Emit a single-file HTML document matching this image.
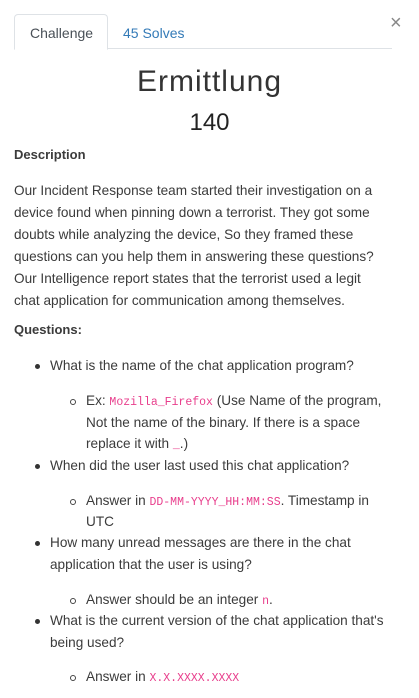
<!DOCTYPE html>
<html><head><meta charset="utf-8"><style>
body{margin:0;width:419px;height:698px;background:#fff;font-family:"Liberation Sans",sans-serif;color:#3b3b3b;position:relative;overflow:hidden}
.l{position:absolute;white-space:nowrap;font-size:13.6px;line-height:22px;height:22px}
code{font-family:"Liberation Mono",monospace;color:#e83e8c;font-size:11.5px}
.dot{position:absolute;width:5px;height:5px;border-radius:50%;background:#333}
.circ{position:absolute;width:4px;height:4px;border-radius:50%;border:1px solid #444}
</style></head><body>
<div style="position:absolute;left:14px;top:48px;width:378px;height:1px;background:#dee2e6"></div>
<div style="position:absolute;left:14px;top:14px;width:92px;height:34px;border:1px solid #dee2e6;border-bottom:1px solid #fff;border-radius:4px 4px 0 0;background:#fff"></div>
<div class="l" style="left:30px;top:22px;font-size:14px;color:#495057">Challenge</div>
<div class="l" style="left:123px;top:22px;font-size:14px;color:#337ab7">45 Solves</div>
<div style="position:absolute;left:390px;top:12px;font-size:20px;color:#888">×</div>
<div style="position:absolute;left:0;width:419px;top:64px;text-align:center;font-size:30px;font-weight:300;letter-spacing:1px;color:#333;line-height:36px">Ermittlung</div>
<div style="position:absolute;left:0;width:419px;top:108px;text-align:center;font-size:24px;color:#222;line-height:30px">140</div>
<div class="l" style="left:14px;top:144px;font-weight:bold;font-size:13px">Description</div>
<div class="l" style="left:14px;top:180px">Our Incident Response team started their investigation on a</div>
<div class="l" style="left:14px;top:202px">device found when pinning down a terrorist. They got some</div>
<div class="l" style="left:14px;top:224px">doubts while analyzing the device, So they framed these</div>
<div class="l" style="left:14px;top:246px">questions can you help them in answering these questions?</div>
<div class="l" style="left:14px;top:268px">Our Intelligence report states that the terrorist used a legit</div>
<div class="l" style="left:14px;top:290px">chat application for communication among themselves.</div>
<div class="l" style="left:14px;top:319px;font-weight:bold;font-size:13px">Questions:</div>
<div class="dot" style="left:35px;top:364px"></div>
<div class="l" style="left:50px;top:355px">What is the name of the chat application program?</div>
<div class="circ" style="left:70px;top:399px"></div>
<div class="l" style="left:86px;top:390px">Ex: <code>Mozilla_Firefox</code> (Use Name of the program,</div>
<div class="l" style="left:86px;top:412px">Not the name of the binary. If there is a space</div>
<div class="l" style="left:86px;top:433px">replace it with <code>_</code>.)</div>
<div class="dot" style="left:35px;top:464px"></div>
<div class="l" style="left:50px;top:455px">When did the user last used this chat application?</div>
<div class="circ" style="left:70px;top:499px"></div>
<div class="l" style="left:86px;top:490px">Answer in <code>DD-MM-YYYY_HH:MM:SS</code>. Timestamp in</div>
<div class="l" style="left:86px;top:511px">UTC</div>
<div class="dot" style="left:35px;top:541px"></div>
<div class="l" style="left:50px;top:532px">How many unread messages are there in the chat</div>
<div class="l" style="left:50px;top:554px">application that the user is using?</div>
<div class="circ" style="left:70px;top:598px"></div>
<div class="l" style="left:86px;top:589px">Answer should be an integer <code>n</code>.</div>
<div class="dot" style="left:35px;top:619px"></div>
<div class="l" style="left:50px;top:610px">What is the current version of the chat application that's</div>
<div class="l" style="left:50px;top:632px">being used?</div>
<div class="circ" style="left:70px;top:675px"></div>
<div class="l" style="left:86px;top:666px">Answer in <code>X.X.XXXX.XXXX</code></div>
</body></html>
